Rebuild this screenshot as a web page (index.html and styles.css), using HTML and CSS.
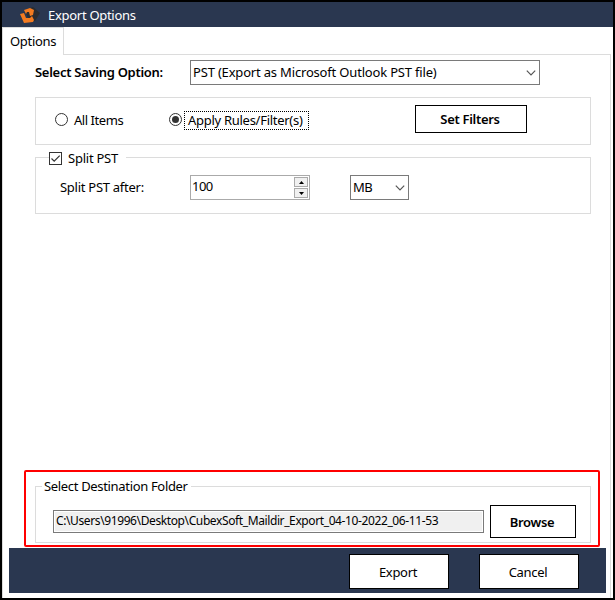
FILE: index.html
```html
<!DOCTYPE html>
<html lang="en">
<head>
<meta charset="utf-8">
<title>Export Options</title>
<link rel="stylesheet" href="styles.css">
</head>
<body>
<div class="window">
  <header class="titlebar">
    <svg class="logo" width="20" height="18" viewBox="0 0 20 18">
      <path d="M5 3L13 0L20 6L15 14L9 14Z" fill="#2b2c2f"/>
      <path d="M0 7L4 6L6 11L10 11L12 9L14 13L13 15L4 16Z" fill="#f47b20"/>
      <path d="M4 3L10 1L14 3L13 8L10 9L9 5L7 5L6 7Z" fill="#f47b20"/>
    </svg>
    <span class="t-title">Export Options</span>
  </header>
  <nav class="tabs"><div class="tab"><span class="t-tab">Options</span></div><div class="tabs-rest"></div></nav>
  <main class="page">
    <div class="saving">
      <label class="saving-label"><span class="t-saving">Select Saving Option:</span></label>
      <div class="select wide"><span class="t-select">PST (Export as Microsoft Outlook PST file)</span>
        <svg width="10" height="6" viewBox="0 0 10 6"><path d="M.8.7L5 4.9L9.2.7"/></svg></div>
    </div>
    <section class="group filters">
      <div class="radio first"><i class="dot"></i><span class="t-all">All Items</span></div>
      <div class="radio second"><i class="dot on"></i><span class="focus"><span class="t-apply">Apply Rules/Filter(s)</span></span></div>
      <button class="btn set"><span class="t-set">Set Filters</span></button>
    </section>
    <section class="group split">
      <div class="legend split-legend">
        <svg class="check" width="13" height="13" viewBox="0 0 13 13"><rect x=".5" y=".5" width="12" height="12"/><path d="M2.5 6.5L5.2 9.2L10.7 3.7"/></svg>
        <span class="t-split">Split PST</span>
      </div>
      <div class="split-row">
        <label class="after"><span class="t-after">Split PST after:</span></label>
        <div class="spin"><span class="t-num">100</span>
          <div class="arrows"><i><svg width="5" height="3"><path d="M0 3L2.5 0L5 3Z"/></svg></i><i><svg width="5" height="3"><path d="M0 0L2.5 3L5 0Z"/></svg></i></div>
        </div>
        <div class="select unit"><span class="t-mb">MB</span>
          <svg width="10" height="6" viewBox="0 0 10 6"><path d="M.8.7L5 4.9L9.2.7"/></svg></div>
      </div>
    </section>
    <div class="highlight">
      <section class="group dest">
        <div class="legend dest-legend"><span class="t-dest">Select Destination Folder</span></div>
        <div class="dest-row">
          <div class="path"><span class="t-path">C:\Users\91996\Desktop\CubexSoft_Maildir_Export_04-10-2022_06-11-53</span></div>
          <button class="btn browse"><span class="t-browse">Browse</span></button>
        </div>
      </section>
    </div>
    <footer class="footer">
      <button class="btn plain"><span class="t-export">Export</span></button>
      <button class="btn plain"><span class="t-cancel">Cancel</span></button>
    </footer>
  </main>
</div>
</body>
</html>
```
FILE: styles.css
```css
* { box-sizing: border-box; }
body { margin: 0; font: 13px/18px "Noto Sans", "Open Sans", sans-serif; color: #000; }
span { white-space: nowrap; }
svg { display: block; flex: none; }
.window { width: 615px; height: 600px; border: 2px solid #000; background: #fff; display: flex; flex-direction: column; }
.titlebar { height: 25px; flex: none; background: #2a3750; color: #fff; display: flex; align-items: center; padding: 0 0 0 18px; }
.logo { margin: 2px 8px 0 0; }
.tabs { display: flex; height: 28px; flex: none; }
.tab { width: 62px; border: 1px solid #dcdcdc; border-bottom: 0; padding: 4px 0 0 7px; }
.tabs-rest { flex: 1; border-bottom: 1px solid #dcdcdc; margin-right: 2px; }
.page { flex: 1; margin-right: 2px; border: solid #dcdcdc; border-width: 0 1px 0 1px; padding: 5px 4px 5px 6px; display: flex; flex-direction: column; }
.saving { display: flex; height: 25px; margin-left: 26px; align-items: center; flex: none; }
.saving-label { width: 155px; padding-bottom: 1px; }
.select { height: 25px; border: 1px solid #7a7a7a; background: #fff; display: flex; justify-content: space-between; align-items: center; padding: 0 3px 0 2px; }
.select svg path { fill: none; stroke: #555; stroke-width: 1.2; }
.wide { width: 350px; }
.unit { width: 59px; margin-left: 40px; }
.group { border: 1px solid #dcdcdc; width: 556px; margin-left: 26px; flex: none; }
.filters { height: 48px; margin-top: 12px; display: flex; padding-left: 19px; }
.radio { display: flex; align-items: center; height: 43px; }
.first { width: 114px; }
.dot { width: 13px; height: 13px; border: 1px solid #333; border-radius: 50%; margin: 0 6px 0 0; display: flex; flex: none; }
.on { margin-right: 2px; }
.on::after { content: ""; width: 7px; height: 7px; margin: 2px; border-radius: 50%; background: #333; }
.focus { border: 1px dotted #000; height: 19px; width: 125px; margin-top: 2px; padding-left: 3px; line-height: 16px; }
.second { width: 246px; }
.btn { font: inherit; color: #000; background: #fff; border: 1px solid #000; border-radius: 0; padding: 0 2px 0 0; flex: none; display: flex; align-items: center; justify-content: center; }
.set { width: 112px; height: 28px; margin-top: 7px; }
.split { height: 57px; margin-top: 12px; }
.legend { background: #fff; display: flex; align-items: center; height: 18px; }
.split-legend { width: 77px; margin: -9px 0 0 13px; }
.check { margin-right: 6px; }
.check rect { fill: #fff; stroke: #333; }
.check path { fill: none; stroke: #333; stroke-width: 1.2; }
.split-row { display: flex; align-items: center; margin: 8px 0 0 24px; height: 25px; }
.after { width: 130px; padding-bottom: 1px; }
.spin { width: 120px; height: 25px; border: 1px solid #aaa; padding: 0 1px 0 2px; display: flex; justify-content: space-between; align-items: center; }
.arrows { display: grid; gap: 1px; }
.arrows i { width: 14px; height: 10px; border: 1px solid #aaa; background: #f0f0f0; display: grid; place-items: center; }
.highlight { border: 2px solid #f00; border-radius: 2px; width: 576px; height: 77px; margin: auto 0 1px 15px; padding-top: 14px; flex: none; }
.dest { margin-left: 9px; height: 57px; }
.dest-legend { width: 149px; margin: -10px 0 0 6px; padding-left: 2px; }
.dest-row { display: flex; align-items: center; height: 33px; margin: 10px 0 0 17px; }
.path { width: 431px; height: 23px; border: 1px solid #7a7a7a; background: #f0f0f0; box-shadow: inset 0 0 0 1px #fff; padding-left: 2px; line-height: 20px; margin-right: 6px; font-size: 12px; }
.browse { width: 86px; height: 33px; }
.footer { background: #2a3750; height: 45px; display: flex; justify-content: flex-end; align-items: center; gap: 30px; padding: 2px 27px 0 0; flex: none; }
.plain { width: 100px; height: 35px; }
.t-saving, .t-set, .t-browse { font-weight: 600; }
.t-title { letter-spacing: -.29px; }
.t-tab { letter-spacing: -.3px; }
.t-saving { letter-spacing: -.28px; }
.t-select { letter-spacing: -.18px; padding-bottom: 1px; }
.t-all { letter-spacing: -.45px; padding-top: 1px; }
.t-apply { letter-spacing: -.28px; }
.t-set { letter-spacing: -.3px; }
.t-split { letter-spacing: -.24px; }
.t-after { letter-spacing: -.27px; }
.t-num { letter-spacing: -.5px; padding-bottom: 3px; margin-left: -1px; }
.t-mb { letter-spacing: -.5px; padding-bottom: 1px; }
.t-dest { letter-spacing: -.33px; }
.t-path { letter-spacing: -.39px; }
.t-browse { letter-spacing: -.3px; }
.t-export, .t-cancel { letter-spacing: -.3px; }
```
